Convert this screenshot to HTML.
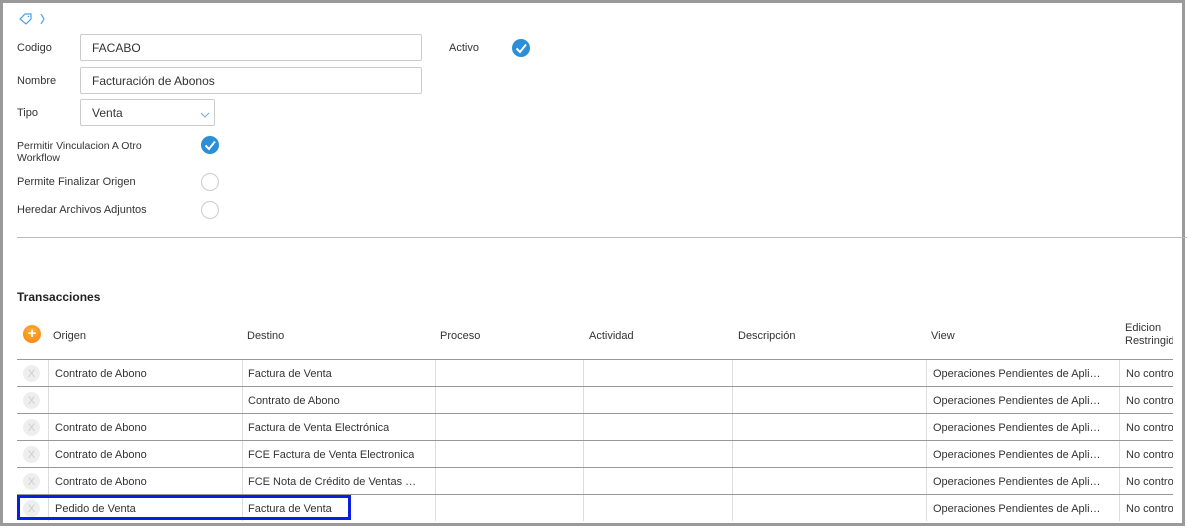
<!DOCTYPE html>
<html><head><meta charset="utf-8"><style>
*{box-sizing:border-box;margin:0;padding:0}
body{width:1187px;height:528px;background:#fff;font-family:"Liberation Sans",sans-serif;color:#333;position:relative;overflow:hidden}
.frame{position:absolute;left:0;top:0;width:1185px;height:526px;border:3px solid #9a9a9a;border-left-width:3px}
.a{position:absolute;font-size:11px;color:#333;white-space:nowrap}
.inp{position:absolute;border:1px solid #ccc;border-radius:2px;font-size:12px;padding-left:11px;line-height:26px;height:27px;color:#333}
.chk{position:absolute;width:18px;height:18px;border-radius:50%;background:#2a8fd6}
.chk svg{position:absolute;left:0;top:0}
.circ{position:absolute;width:18px;height:18px;border-radius:50%;border:1px solid #ccc;background:#fff}
.hl{position:absolute;left:17px;top:237px;width:1170px;height:1px;background:#bbb}
.th{position:absolute;top:329px;font-size:11px;color:#333}
.row{position:absolute;left:17px;width:1156px;height:27px;border-top:1px solid #999}
.cell{position:absolute;top:0;height:26px;font-size:11px;line-height:28px;white-space:nowrap;overflow:hidden}
.vl{position:absolute;top:0;width:1px;height:26px;background:#ddd}
.x{position:absolute;left:6px;top:5px;width:17px;height:17px;border-radius:50%;background:#eee;color:#ccc;font-size:11px;line-height:18px;text-align:center}
</style></head><body>
<div class="frame"></div>
<svg style="position:absolute;left:19px;top:12px" width="30" height="14" viewBox="0 0 30 14"><path d="M1 7 L6 2 L12 2 L12 7 L7 12 Z" fill="none" stroke="#4a9fe0" stroke-width="1.2"/><circle cx="9.5" cy="4.5" r="0.8" fill="#4a9fe0"/><path d="M22 2 L25 7 L22 12" fill="none" stroke="#4a9fe0" stroke-width="1.2"/></svg>
<div class="a" style="left:17px;top:42px">Codigo</div>
<div class="inp" style="left:80px;top:34px;width:342px">FACABO</div>
<div class="a" style="left:449px;top:42px">Activo</div>
<div class="chk" style="left:512px;top:39px"><svg width="18" height="18"><path d="M4.5 9.5 L8 13 L14 5.5" fill="none" stroke="#fff" stroke-width="2"/></svg></div>
<div class="a" style="left:17px;top:75px">Nombre</div>
<div class="inp" style="left:80px;top:67px;width:342px">Facturación de Abonos</div>
<div class="a" style="left:17px;top:107px">Tipo</div>
<div class="inp" style="left:80px;top:99px;width:135px">Venta</div>
<svg style="position:absolute;left:200px;top:111px" width="10" height="8"><path d="M1 2 L5 6 L9 2" fill="none" stroke="#7aa6cf" stroke-width="1"/></svg>
<div class="a" style="left:17px;top:140px;line-height:12px;font-size:10.5px">Permitir Vinculacion A Otro<br>Workflow</div>
<div class="chk" style="left:201px;top:136px"><svg width="18" height="18"><path d="M4.5 9.5 L8 13 L14 5.5" fill="none" stroke="#fff" stroke-width="2"/></svg></div>
<div class="a" style="left:17px;top:176px">Permite Finalizar Origen</div>
<div class="circ" style="left:201px;top:173px"></div>
<div class="a" style="left:17px;top:204px">Heredar Archivos Adjuntos</div>
<div class="circ" style="left:201px;top:201px"></div>
<div class="hl"></div>
<div class="a" style="left:17px;top:290px;font-size:12px;font-weight:bold;color:#222">Transacciones</div>
<div style="position:absolute;left:23px;top:325px;width:18px;height:18px;border-radius:50%;background:radial-gradient(circle at 50% 35%,#ffb02e,#f77f1a);color:#fff;font-size:15px;line-height:17px;text-align:center;font-weight:bold">+</div>
<div class="th" style="left:53px;top:330px">Origen</div>
<div class="th" style="left:247px;top:330px">Destino</div>
<div class="th" style="left:440px;top:330px">Proceso</div>
<div class="th" style="left:589px;top:330px">Actividad</div>
<div class="th" style="left:738px;top:330px">Descripción</div>
<div class="th" style="left:931px;top:330px">View</div>
<div class="th" style="left:1125px;top:322px;line-height:13px;width:48px;overflow:hidden;white-space:nowrap">Edicion<br>Restringida</div>
<div class="row" style="top:359px"><div class="x">X</div><div class="vl" style="left:31px"></div><div class="cell" style="left:38px">Contrato de Abono</div><div class="vl" style="left:225px"></div><div class="cell" style="left:231px">Factura de Venta</div><div class="vl" style="left:418px"></div><div class="vl" style="left:566px"></div><div class="vl" style="left:715px"></div><div class="vl" style="left:909px"></div><div class="cell" style="left:916px">Operaciones Pendientes de Apli…</div><div class="vl" style="left:1102px"></div><div class="cell" style="left:1109px;width:47px">No controla</div></div>
<div class="row" style="top:386px"><div class="x">X</div><div class="vl" style="left:31px"></div><div class="vl" style="left:225px"></div><div class="cell" style="left:231px">Contrato de Abono</div><div class="vl" style="left:418px"></div><div class="vl" style="left:566px"></div><div class="vl" style="left:715px"></div><div class="vl" style="left:909px"></div><div class="cell" style="left:916px">Operaciones Pendientes de Apli…</div><div class="vl" style="left:1102px"></div><div class="cell" style="left:1109px;width:47px">No controla</div></div>
<div class="row" style="top:413px"><div class="x">X</div><div class="vl" style="left:31px"></div><div class="cell" style="left:38px">Contrato de Abono</div><div class="vl" style="left:225px"></div><div class="cell" style="left:231px">Factura de Venta Electrónica</div><div class="vl" style="left:418px"></div><div class="vl" style="left:566px"></div><div class="vl" style="left:715px"></div><div class="vl" style="left:909px"></div><div class="cell" style="left:916px">Operaciones Pendientes de Apli…</div><div class="vl" style="left:1102px"></div><div class="cell" style="left:1109px;width:47px">No controla</div></div>
<div class="row" style="top:440px"><div class="x">X</div><div class="vl" style="left:31px"></div><div class="cell" style="left:38px">Contrato de Abono</div><div class="vl" style="left:225px"></div><div class="cell" style="left:231px">FCE Factura de Venta Electronica</div><div class="vl" style="left:418px"></div><div class="vl" style="left:566px"></div><div class="vl" style="left:715px"></div><div class="vl" style="left:909px"></div><div class="cell" style="left:916px">Operaciones Pendientes de Apli…</div><div class="vl" style="left:1102px"></div><div class="cell" style="left:1109px;width:47px">No controla</div></div>
<div class="row" style="top:467px"><div class="x">X</div><div class="vl" style="left:31px"></div><div class="cell" style="left:38px">Contrato de Abono</div><div class="vl" style="left:225px"></div><div class="cell" style="left:231px">FCE Nota de Crédito de Ventas …</div><div class="vl" style="left:418px"></div><div class="vl" style="left:566px"></div><div class="vl" style="left:715px"></div><div class="vl" style="left:909px"></div><div class="cell" style="left:916px">Operaciones Pendientes de Apli…</div><div class="vl" style="left:1102px"></div><div class="cell" style="left:1109px;width:47px">No controla</div></div>
<div class="row" style="top:494px"><div class="x">X</div><div class="vl" style="left:31px"></div><div class="cell" style="left:38px">Pedido de Venta</div><div class="vl" style="left:225px"></div><div class="cell" style="left:231px">Factura de Venta</div><div class="vl" style="left:418px"></div><div class="vl" style="left:566px"></div><div class="vl" style="left:715px"></div><div class="vl" style="left:909px"></div><div class="cell" style="left:916px">Operaciones Pendientes de Apli…</div><div class="vl" style="left:1102px"></div><div class="cell" style="left:1109px;width:47px">No controla</div></div>
<div style="position:absolute;left:17px;top:495px;width:334px;height:25px;border:3px solid #0a1ee0"></div>
</body></html>
